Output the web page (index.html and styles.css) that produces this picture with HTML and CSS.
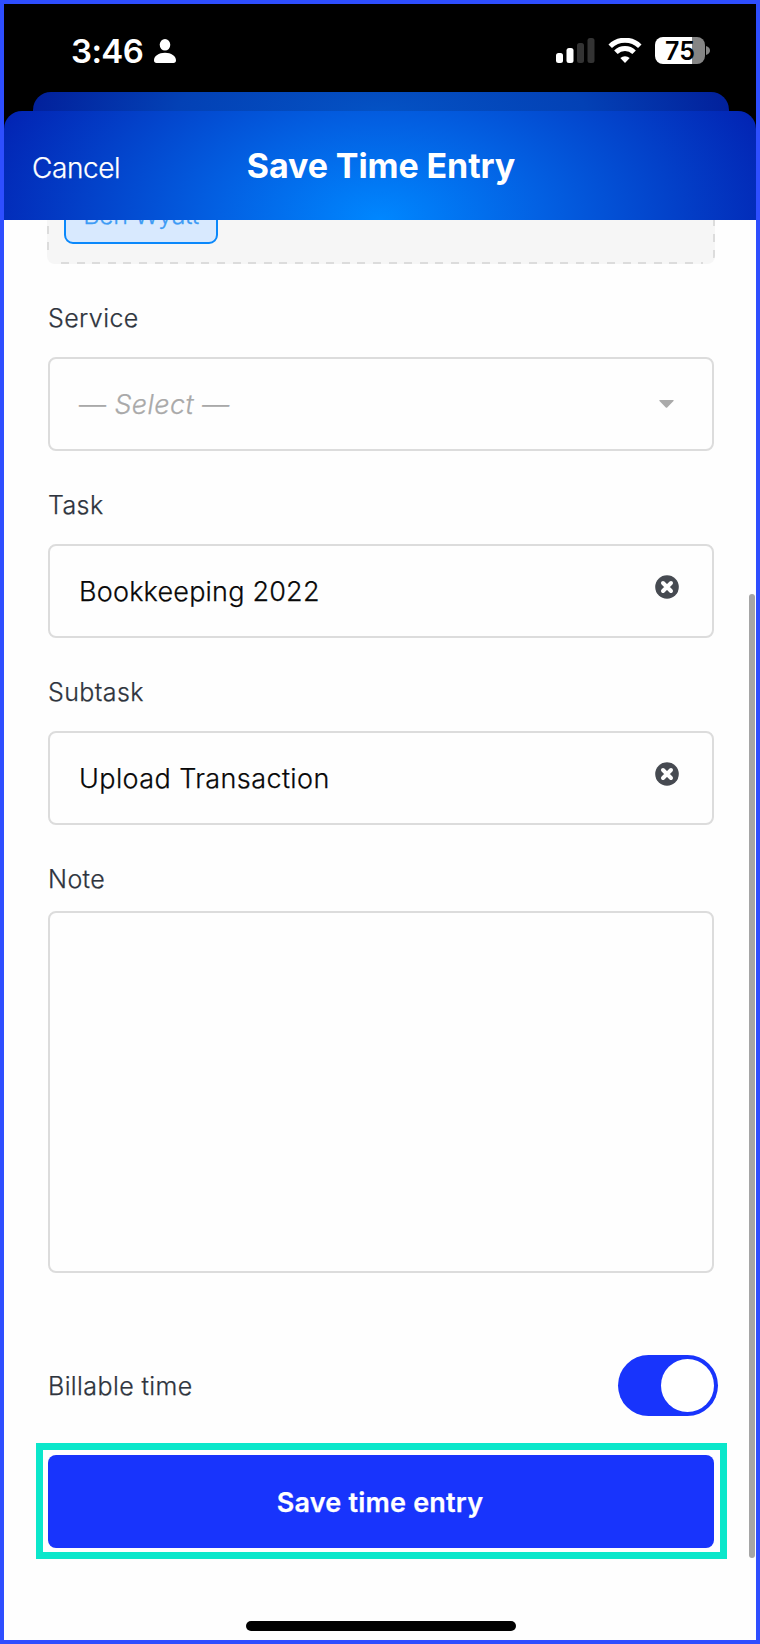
FILE: index.html
```html
<!DOCTYPE html>
<html lang="en">
<head>
<meta charset="UTF-8" />
<meta name="viewport" content="width=device-width, initial-scale=1" />
<title>Save Time Entry</title>
<link rel="stylesheet" href="styles.css">
</head>
<body>
<div class="phone">
    <div class="top">
        <div class="status-bar">
            <span class="clock">3:46</span>
            <svg class="person" width="22" height="24" viewBox="0 0 22 24" fill="#fff">
                <ellipse cx="11" cy="5.8" rx="5.3" ry="5.8"/>
                <path d="M11 13.8c6.2 0 11 3.5 11 7.4 0 1.7-.9 2.8-2.6 2.8H2.6C.9 24 0 22.900 0 21.200c0-3.900 4.800-7.400 11-7.400z"/>
            </svg>
            <svg class="signal" width="39" height="25" viewBox="0 0 39 25" fill="#fff">
                <rect x="0" y="15" width="7" height="10" rx="2.500"/>
                <rect x="10.500" y="10" width="7" height="15" rx="2.500"/>
                <rect x="21" y="5" width="7" height="20" rx="2.500" fill="#333"/>
                <rect x="31.500" y="0" width="7" height="25" rx="2.500" fill="#333"/>
            </svg>
            <svg class="wifi" width="34" height="25" viewBox="0 0 34 25" fill="none" stroke="#fff" stroke-width="5">
                <path d="M2.200 8.200a21.200 21.200 0 0 1 29.600 0"/>
                <path d="M7.900 14.200a13 13 0 0 1 18.200 0"/>
                <path d="M17 25l-4.700-5a7 7 0 0 1 9.400 0z" fill="#fff" stroke="none"/>
            </svg>
            <div class="battery"><span>75</span></div>
            <svg class="battery-cap" width="4" height="9" viewBox="0 0 4 9"><path d="M0 0c2.500.6 4 2.300 4 4.500S2.500 8.400 0 9z" fill="#858585"/></svg>
        </div>
        <div class="back-card"></div>
        <div class="header">
            <a class="cancel">Cancel</a>
            <h1>Save Time Entry</h1>
        </div>
    </div>

    <div class="form">
        <div class="people"><span class="chip">Ben Wyatt</span></div>

        <label>Service</label>
        <div class="field placeholder">
            <span><b>—</b> <i>Select —</i></span>
            <svg class="caret" width="15" height="8" viewBox="0 0 15 8"><path d="M1 0h13q1.200.2.500 1L8.200 7.400q-.7.800-1.400 0L.5 1Q-.2.200 1 0z" fill="#aaa"/></svg>
        </div>

        <label>Task</label>
        <div class="field">
            <span>Bookkeeping 2022</span>
            <svg class="clear" width="24" height="24" viewBox="0 0 24 24"><circle cx="12" cy="12" r="11.800" fill="#464a51"/><path d="M8 8l8 8M16 8l-8 8" stroke="#fff" stroke-width="4" stroke-linecap="round"/></svg>
        </div>

        <label>Subtask</label>
        <div class="field">
            <span class="subtask">Upload Transaction</span>
            <svg class="clear" width="24" height="24" viewBox="0 0 24 24"><circle cx="12" cy="12" r="11.800" fill="#464a51"/><path d="M8 8l8 8M16 8l-8 8" stroke="#fff" stroke-width="4" stroke-linecap="round"/></svg>
        </div>

        <label class="note-label">Note</label>
        <div class="field note"></div>

        <div class="billable">
            <span>Billable time</span>
            <div class="toggle"><div class="knob"></div></div>
        </div>
        <div class="highlight"><a class="btn-save">Save time entry</a></div>
    </div>

    <div class="home-indicator"></div>
    <div class="scrollbar"></div>
</div>
</body>
</html>
```

FILE: styles.css
```css
* {
    box-sizing: border-box;
}
body {
    margin: 0;
    font-family: Inter, "Liberation Sans", sans-serif;
    font-weight: 300;
}
.phone {
    position: relative;
    display: flex;
    flex-direction: column;
    width: 760px;
    height: 1644px;
    border: 4px solid #2e4eff;
    background: #fefefe;
    overflow: hidden;
}

.top {
    position: relative;
    z-index: 1;
    background: #000;
}
.status-bar {
    display: flex;
    align-items: flex-start;
    height: 88px;
    padding: 33px 46px 0 67px;
}
.clock {
    width: 83px;
    color: #fff;
    font-size: 33px;
    font-weight: 600;
    letter-spacing: -0.6px;
    line-height: 28px;
    white-space: nowrap;
}
.person {
    margin-top: 2px;
}
.signal {
    margin: 1px 13px 0 auto;
}
.wifi {
    margin: 1px 13px 0 0;
}
.battery {
    width: 50px;
    height: 27px;
    border-radius: 8px;
    background: linear-gradient(to right, #fff 75%, #858585 75%);
    color: #000;
    font-size: 25px;
    font-weight: 600;
    line-height: 28px;
    text-align: center;
}
.battery-cap {
    margin: 9px 0 0 1px;
}

/* Header */
.back-card {
    height: 19px;
    margin: 0 27px 0 29px;
    border-radius: 18px 18px 0 0;
    background: radial-gradient(ellipse 370px 100px at 50% 100%, #0452c4, #0341b5 55%, #021c98);
}
.header {
    position: relative;
    display: flex;
    align-items: center;
    justify-content: center;
    height: 109px;
    border-radius: 18px 18px 0 0;
    background: radial-gradient(ellipse 420px 250px at 50% 100%, #0087ff, #0361e3 38%, #0341c9 70%, #0222b2);
}
.header h1 {
    margin: 0 0 0 2px;
    color: #fff;
    font-size: 34px;
    font-weight: 700;
    letter-spacing: -0.1px;
    line-height: 40px;
}
.cancel {
    position: absolute;
    left: 28px;
    top: 40px;
    color: #fff;
    font-size: 28px;
    letter-spacing: -0.4px;
    line-height: 34px;
    -webkit-text-stroke: 0.25px;
}

/* Form */
.form {
    padding: 0 33px 0 32px;
    -webkit-text-stroke: 0.25px;
}
.people {
    display: flex;
    align-items: flex-end;
    width: 668px;
    height: 44px;
    margin-left: 11px;
    padding: 0 17px 20px;
    border-radius: 0 0 8px 8px;
    background:
        repeating-linear-gradient(to right, #dcdcdc 0 8px, transparent 8px 15.6px) 14px 100% / 642px 2px no-repeat,
        repeating-linear-gradient(to bottom, #dcdcdc 0 8px, transparent 8px 16px) 0 6px / 2px 30px no-repeat,
        repeating-linear-gradient(to bottom, #dcdcdc 0 8px, transparent 8px 16px) 100% -2px / 2px 42px no-repeat,
        #f6f6f6;
}
.chip {
    width: 154px;
    height: 54px;
    border: 2px solid #0a88fb;
    border-radius: 9px;
    background: #d8e9fe;
    color: #3d9bf5;
    font-size: 25px;
    letter-spacing: -0.3px;
    line-height: 47px;
    text-align: center;
}
label {
    display: block;
    height: 30px;
    margin: 39px 0 24px 12px;
    color: #2e343d;
    font-size: 25px;
    letter-spacing: 0.4px;
    line-height: 30px;
}
.field {
    display: flex;
    align-items: center;
    justify-content: space-between;
    width: 666px;
    height: 94px;
    margin-left: 12px;
    padding: 0 33px 0 29px;
    border: 2px solid #dcdcdc;
    border-radius: 8px;
    color: #080808;
    font-size: 27px;
    letter-spacing: 0.2px;
}
.subtask {
    letter-spacing: 0.4px;
}
.placeholder {
    padding-right: 38px;
    color: #a9a9a9;
    letter-spacing: 0.4px;
}
.placeholder b {
    font-weight: 300;
}
.clear {
    margin-top: -8px;
}
.note-label {
    margin-bottom: 17px;
}
.note {
    height: 362px;
}
.billable {
    display: flex;
    align-items: center;
    justify-content: space-between;
    height: 61px;
    margin: 82px 5px 27px 12px;
    color: #2e343d;
    font-size: 25px;
    letter-spacing: 0.4px;
}
.toggle {
    display: flex;
    justify-content: flex-end;
    width: 100px;
    height: 61px;
    padding: 4px;
    border-radius: 31px;
    background: #1834fc;
}
.knob {
    width: 53px;
    height: 53px;
    border-radius: 50%;
    background: #fff;
}
.highlight {
    width: 691px;
    height: 116px;
    padding: 5px 6px 5px 5px;
    border: 7px solid #0be7cb;
}
.btn-save {
    display: block;
    height: 93px;
    padding-right: 2px;
    border-radius: 8px;
    background: #1834fc;
    color: #fff;
    font-size: 27px;
    font-weight: 600;
    letter-spacing: 0.2px;
    line-height: 95px;
    text-align: center;
}

.home-indicator {
    width: 270px;
    height: 10px;
    margin: 62px 0 0 242px;
    border-radius: 5px;
    background: #000;
}
.scrollbar {
    position: absolute;
    top: 590px;
    right: 1px;
    width: 6px;
    height: 964px;
    border-radius: 3px;
    background: #a5a5a5;
}
```
